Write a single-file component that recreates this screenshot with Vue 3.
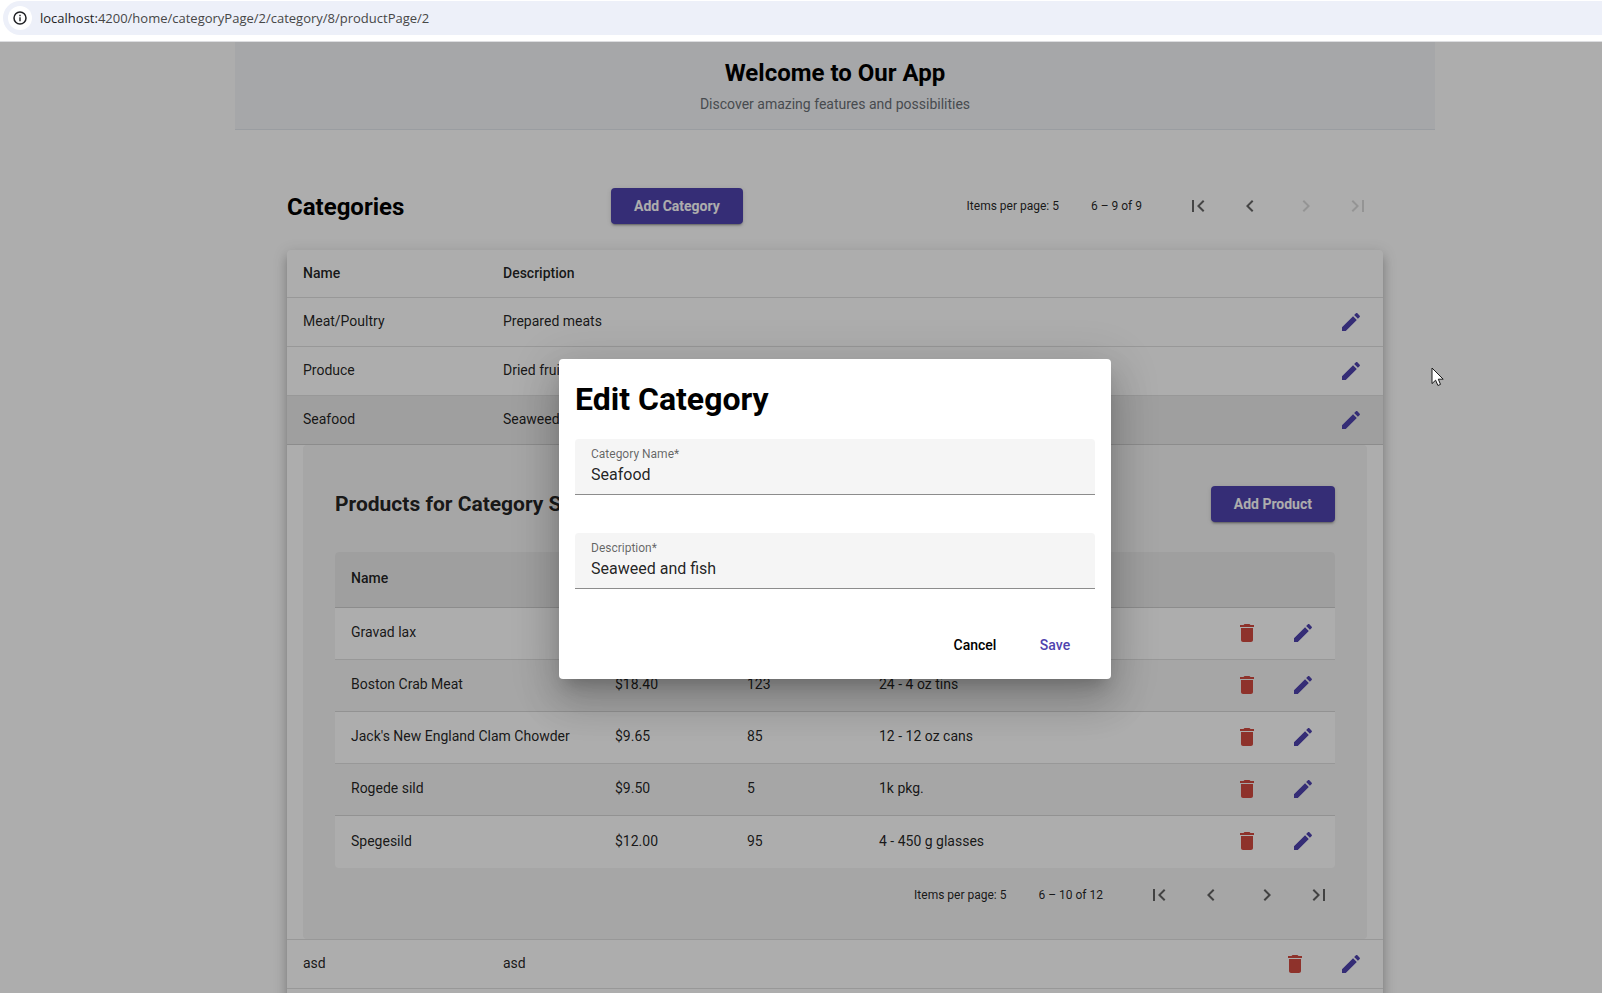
<script setup>
import { ref } from 'vue'

const categories = [
  { id: 6, name: 'Meat/Poultry', description: 'Prepared meats', removable: false },
  { id: 7, name: 'Produce', description: 'Dried fruit and bean curd', removable: false },
  { id: 8, name: 'Seafood', description: 'Seaweed and fish', removable: false },
  { id: 9, name: 'asd', description: 'asd', removable: true }
]
const openId = 8

const products = [
  { name: 'Gravad lax', price: '$26.00', stock: 11, unit: '12 - 500 g pkgs.' },
  { name: 'Boston Crab Meat', price: '$18.40', stock: 123, unit: '24 - 4 oz tins' },
  { name: "Jack's New England Clam Chowder", price: '$9.65', stock: 85, unit: '12 - 12 oz cans' },
  { name: 'Rogede sild', price: '$9.50', stock: 5, unit: '1k pkg.' },
  { name: 'Spegesild', price: '$12.00', stock: 95, unit: '4 - 450 g glasses' }
]

const icons = {
  edit: 'M3 17.25V21h3.75L17.81 9.94l-3.75-3.75L3 17.25zM20.71 7.04c.39-.39.39-1.02 0-1.41l-2.34-2.34c-.39-.39-1.02-.39-1.41 0l-1.83 1.83 3.75 3.75 1.83-1.83z',
  trash: 'M6 19c0 1.1.9 2 2 2h8c1.1 0 2-.9 2-2V7H6v12zM19 4h-3.5l-1-1h-5l-1 1H5v2h14V4z',
  first: 'M18.41 16.59L13.82 12l4.59-4.59L17 6l-6 6 6 6zM6 6h2v12H6z',
  prev: 'M15.41 7.41L14 6l-6 6 6 6 1.41-1.41L10.83 12z',
  next: 'M10 6L8.59 7.41 13.17 12l-4.58 4.59L10 18l6-6z',
  last: 'M5.59 7.41L10.18 12l-4.59 4.59L7 18l6-6-6-6zM16 6h2v12h-2z'
}

const categoryName = ref('Seafood')
const description = ref('Seaweed and fish')
</script>

<template>
  <div class="browser">
    <div class="toolbar">
      <div class="omnibox">
        <button class="site-info" type="button" aria-label="View site information">
          <svg viewBox="0 0 16 16" width="16" height="16">
            <circle cx="8" cy="8" r="6" fill="none" stroke="currentColor" stroke-width="1.5" />
            <path d="M7.3 7.2h1.4v4H7.3zM7.3 4.8h1.4v1.4H7.3z" fill="currentColor" />
          </svg>
        </button>
        <span class="url"><b>localhost:</b>4200/home/categoryPage/2/category/8/productPage/2</span>
      </div>
    </div>

    <div class="viewport">
      <div class="page">
        <header class="hero">
          <h1>Welcome to Our App</h1>
          <p>Discover amazing features and possibilities</p>
        </header>

        <main class="content">
          <div class="bar">
            <h2>Categories</h2>
            <button class="raised" type="button">Add Category</button>
            <nav class="paginator" aria-label="Category pages">
              <span>Items per page: 5</span>
              <span>6 – 9 of 9</span>
              <div class="pager">
                <button class="icon-btn" type="button" aria-label="First page"><svg viewBox="0 0 24 24"><path :d="icons.first" /></svg></button>
                <button class="icon-btn" type="button" aria-label="Previous page"><svg viewBox="0 0 24 24"><path :d="icons.prev" /></svg></button>
                <button class="icon-btn second" type="button" disabled aria-label="Next page"><svg viewBox="0 0 24 24"><path :d="icons.next" /></svg></button>
                <button class="icon-btn" type="button" disabled aria-label="Last page"><svg viewBox="0 0 24 24"><path :d="icons.last" /></svg></button>
              </div>
            </nav>
          </div>

          <div class="card">
            <table class="categories">
              <colgroup>
                <col class="c-name" />
                <col />
                <col class="c-actions" />
              </colgroup>
              <thead>
                <tr>
                  <th>Name</th>
                  <th>Description</th>
                  <th></th>
                </tr>
              </thead>
              <tbody>
                <template v-for="c in categories" :key="c.id">
                  <tr :class="{ selected: c.id === openId }">
                    <td>{{ c.name }}</td>
                    <td>{{ c.description }}</td>
                    <td class="actions-cell">
                      <div class="actions">
                        <button v-if="c.removable" class="icon-btn warn" type="button" aria-label="Delete category"><svg viewBox="0 0 24 24"><path :d="icons.trash" /></svg></button>
                        <button class="icon-btn primary" type="button" aria-label="Edit category"><svg viewBox="0 0 24 24"><path :d="icons.edit" /></svg></button>
                      </div>
                    </td>
                  </tr>
                  <tr v-if="c.id === openId" class="detail">
                    <td colspan="3">
                      <section class="panel">
                        <div class="panel-bar">
                          <h3>Products for Category {{ c.name }}</h3>
                          <button class="raised" type="button">Add Product</button>
                        </div>
                        <table class="products">
                          <colgroup>
                            <col class="p-name" />
                            <col class="p-small" />
                            <col class="p-small" />
                            <col />
                            <col class="c-actions" />
                          </colgroup>
                          <thead>
                            <tr>
                              <th>Name</th>
                              <th>Price</th>
                              <th>Stock</th>
                              <th>Quantity per unit</th>
                              <th></th>
                            </tr>
                          </thead>
                          <tbody>
                            <tr v-for="p in products" :key="p.name">
                              <td>{{ p.name }}</td>
                              <td>{{ p.price }}</td>
                              <td>{{ p.stock }}</td>
                              <td>{{ p.unit }}</td>
                              <td class="actions-cell">
                                <div class="actions">
                                  <button class="icon-btn warn" type="button" aria-label="Delete product"><svg viewBox="0 0 24 24"><path :d="icons.trash" /></svg></button>
                                  <button class="icon-btn primary" type="button" aria-label="Edit product"><svg viewBox="0 0 24 24"><path :d="icons.edit" /></svg></button>
                                </div>
                              </td>
                            </tr>
                          </tbody>
                        </table>
                        <nav class="paginator inner" aria-label="Product pages">
                          <span>Items per page: 5</span>
                          <span>6 – 10 of 12</span>
                          <div class="pager">
                            <button class="icon-btn" type="button" aria-label="First page"><svg viewBox="0 0 24 24"><path :d="icons.first" /></svg></button>
                            <button class="icon-btn" type="button" aria-label="Previous page"><svg viewBox="0 0 24 24"><path :d="icons.prev" /></svg></button>
                            <button class="icon-btn second" type="button" aria-label="Next page"><svg viewBox="0 0 24 24"><path :d="icons.next" /></svg></button>
                            <button class="icon-btn" type="button" aria-label="Last page"><svg viewBox="0 0 24 24"><path :d="icons.last" /></svg></button>
                          </div>
                        </nav>
                      </section>
                    </td>
                  </tr>
                </template>
              </tbody>
            </table>
          </div>
        </main>
      </div>

      <div class="overlay">
        <form class="dialog" role="dialog" aria-labelledby="dialog-title" @submit.prevent>
          <h2 id="dialog-title">Edit Category</h2>
          <div class="field">
            <label for="category-name">Category Name*</label>
            <input id="category-name" v-model="categoryName" type="text" required />
          </div>
          <div class="field">
            <label for="category-description">Description*</label>
            <input id="category-description" v-model="description" type="text" required />
          </div>
          <div class="dialog-actions">
            <button class="text-btn" type="button">Cancel</button>
            <button class="text-btn save" type="submit">Save</button>
          </div>
        </form>
      </div>

      <svg class="pointer" viewBox="0 0 13 20" width="13" height="20" aria-hidden="true">
        <path d="M1 1v15.6l3.6-3.4 2.3 5.3 2.6-1.1-2.2-5.2h4.9z" fill="#fff" stroke="#1a1a1a" stroke-width="1" />
      </svg>
    </div>
  </div>
</template>

<style>
body {
  margin: 0;
  overflow: hidden;
}
</style>

<style scoped>
.browser {
  display: flex;
  flex-direction: column;
  height: 100vh;
  background: #fff;
  color: rgba(0, 0, 0, 0.87);
  font-family: Roboto, "Liberation Sans", sans-serif;
  font-size: 14px;
  line-height: 20px;
}

.browser *,
.browser *::before {
  box-sizing: border-box;
}

button {
  margin: 0;
  padding: 0;
  border: 0;
  background: none;
  font: inherit;
  color: inherit;
}

h1,
h2,
h3,
p {
  margin: 0;
}

.toolbar {
  flex: none;
  padding: 1px 0 6px 3px;
  border-bottom: 1px solid #dcdde0;
  background: #fff;
}

.omnibox {
  display: flex;
  align-items: center;
  gap: 8px;
  height: 34px;
  padding-left: 5px;
  border-radius: 17px 0 0 17px;
  background: #edf0f9;
}

.site-info {
  display: flex;
  align-items: center;
  justify-content: center;
  width: 24px;
  height: 24px;
  border-radius: 12px;
  background: #fff;
  color: #202124;
}

.url {
  color: #474747;
  font-family: "Open Sans", "Noto Sans", sans-serif;
  font-size: 13px;
}

.url b {
  color: #1f1f1f;
  font-weight: 400;
}

.viewport {
  position: relative;
  flex: 1;
  min-height: 0;
  overflow: hidden;
}

.page {
  padding-left: 68px;
}

.hero {
  max-width: 1200px;
  margin: 0 auto;
  padding: 15px 16px;
  border-bottom: 1px solid #e3e8ee;
  background: #f5f7fa;
  text-align: center;
}

.hero h1 {
  margin-bottom: 5px;
  color: #000;
  font-size: 24px;
  line-height: 32px;
}

.hero p {
  color: #6a6f75;
  font-size: 14px;
}

.content {
  max-width: 1200px;
  margin: 0 auto;
  padding: 48px 52px 0;
}

.bar {
  display: grid;
  grid-template-columns: 324px auto 1fr;
  align-items: center;
  height: 56px;
  margin-bottom: 16px;
}

.bar h2 {
  padding-top: 2px;
  color: #000;
  font-size: 24px;
  line-height: 32px;
}

.raised {
  height: 36px;
  padding: 0 23px;
  border-radius: 4px;
  background: #4f43ae;
  color: #fff;
  font-weight: 700;
  box-shadow: 0 3px 1px -2px rgba(0, 0, 0, 0.2), 0 2px 2px 0 rgba(0, 0, 0, 0.14), 0 1px 5px 0 rgba(0, 0, 0, 0.12);
}

.paginator {
  display: flex;
  align-items: center;
  justify-content: flex-end;
  gap: 32px;
  padding-right: 1px;
  font-size: 12px;
}

.paginator.inner {
  height: 54px;
  margin-right: -8px;
  padding-right: 0;
}

.pager {
  display: flex;
  gap: 4px;
}

.pager .second {
  margin-left: 4px;
}

.icon-btn {
  display: flex;
  align-items: center;
  justify-content: center;
  width: 48px;
  height: 48px;
  color: rgba(0, 0, 0, 0.6);
}

.icon-btn:disabled {
  color: rgba(0, 0, 0, 0.14);
}

.icon-btn svg {
  width: 24px;
  height: 24px;
  fill: currentColor;
}

.icon-btn.primary {
  color: #4f43ae;
}

.icon-btn.warn {
  color: #d24b40;
}

.card {
  padding-bottom: 16px;
  border-radius: 4px;
  background: #fff;
  box-shadow: 0 5px 5px -3px rgba(0, 0, 0, 0.2), 0 8px 10px 1px rgba(0, 0, 0, 0.14), 0 3px 14px 2px rgba(0, 0, 0, 0.12);
}

table {
  width: 100%;
  border-collapse: separate;
  border-spacing: 0;
  table-layout: fixed;
}

th,
td {
  padding: 0 16px 2px;
  border-bottom: 1px solid rgba(0, 0, 0, 0.12);
  text-align: left;
  white-space: nowrap;
}

th {
  height: 48px;
  font-weight: 500;
}

td {
  height: 49px;
}

.c-name {
  width: 200px;
}

.c-actions {
  width: 136px;
}

td.actions-cell {
  padding: 0 8px 0 0;
}

.actions {
  display: flex;
  justify-content: flex-end;
  gap: 8px;
}

.selected td {
  background: #ebebeb;
}

.detail > td {
  height: auto;
  padding-bottom: 0;
}

.panel {
  padding: 32px 32px 17px;
  border-radius: 4px;
  background: #f5f5f5;
}

.panel-bar {
  display: flex;
  align-items: center;
  justify-content: space-between;
  height: 54px;
  margin-bottom: 21px;
}

.panel-bar h3 {
  font-size: 21px;
  line-height: 28px;
}

.products {
  overflow: hidden;
  border-radius: 4px;
  background: #fff;
}

.products th {
  height: 56px;
  padding-bottom: 4px;
  background: #ebebeb;
}

.products td {
  height: 52px;
  padding-bottom: 4px;
}

.products td.actions-cell {
  padding-bottom: 2px;
}

.products tbody tr:nth-child(even) td {
  background: #f5f5f5;
}

.products tbody tr:last-child td {
  padding-bottom: 2px;
  border-bottom: 0;
}

.p-name {
  width: 264px;
}

.p-small {
  width: 132px;
}

.overlay {
  position: absolute;
  inset: 0;
  display: flex;
  align-items: center;
  justify-content: center;
  padding: 3px 0 0 68px;
  background: rgba(0, 0, 0, 0.32);
}

.dialog {
  width: 552px;
  padding: 16px;
  border-radius: 4px;
  background: #fff;
  box-shadow: 0 11px 15px -7px rgba(0, 0, 0, 0.2), 0 24px 38px 3px rgba(0, 0, 0, 0.14), 0 9px 46px 8px rgba(0, 0, 0, 0.12);
}

.dialog h2 {
  margin-bottom: 16px;
  color: #000;
  font-size: 32px;
  line-height: 48px;
}

.field {
  display: flex;
  flex-direction: column;
  height: 56px;
  padding: 7px 16px 0;
  border-bottom: 1px solid #8c8c8c;
  border-radius: 4px 4px 0 0;
  background: #f5f5f5;
}

.field + .field {
  margin-top: 38px;
}

.field label {
  color: rgba(0, 0, 0, 0.6);
  font-size: 12px;
  line-height: 16px;
}

.field input {
  width: 100%;
  height: 24px;
  padding: 0;
  border: 0;
  outline: 0;
  background: none;
  color: rgba(0, 0, 0, 0.87);
  font-family: inherit;
  font-size: 16px;
}

.dialog-actions {
  display: flex;
  justify-content: flex-end;
  gap: 16px;
  margin-top: 38px;
  padding-right: 8px;
}

.text-btn {
  min-width: 64px;
  height: 36px;
  color: #000;
  font-weight: 500;
}

.text-btn.save {
  color: #4f43ae;
}

.pointer {
  position: absolute;
  top: 325px;
  left: 1431px;
}
</style>
